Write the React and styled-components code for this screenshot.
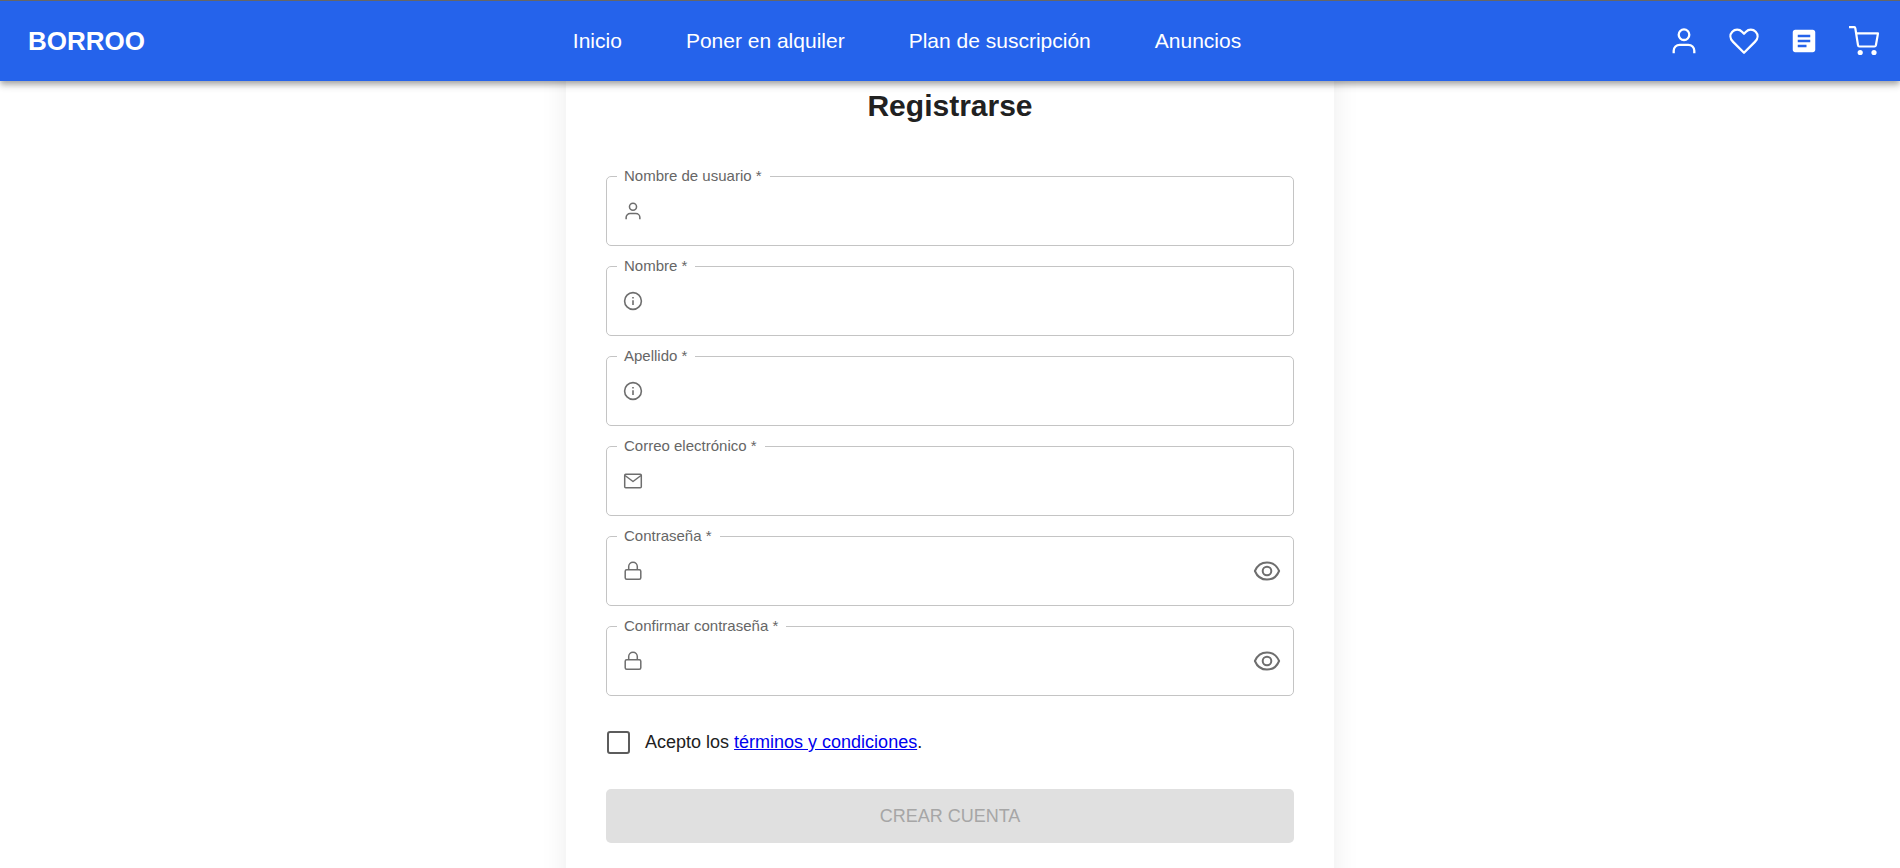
import React, { useState } from "react";
import styled, { createGlobalStyle } from "styled-components";
import { MdArticle } from "react-icons/md";

const GlobalStyle = createGlobalStyle`
  *, *::before, *::after { box-sizing: border-box; }
  body {
    margin: 0;
    background: #fff;
    color: #212121;
    font-family: "Liberation Sans", Arial, sans-serif;
  }
`;

const Page = styled.div`
  display: flex;
  flex-direction: column;
  height: 100vh;
`;

const Header = styled.header`
  position: relative;
  z-index: 1;
  flex: none;
  display: flex;
  align-items: center;
  justify-content: space-between;
  height: 81px;
  padding: 0 21px 0 28px;
  border-top: 1px solid #666;
  background: #2563eb;
  color: #fff;
  box-shadow: 0 3px 5px -1px rgba(0, 0, 0, 0.2), 0 5px 6px rgba(0, 0, 0, 0.14),
    0 1px 12px rgba(0, 0, 0, 0.12);
`;

const Brand = styled.a`
  color: inherit;
  font-size: 26px;
  line-height: 32px;
  font-weight: 700;
  text-decoration: none;
`;

const Nav = styled.nav`
  display: flex;
  gap: 64px;
`;

const NavLink = styled.a`
  color: #fff;
  font-size: 21px;
  line-height: 32px;
  text-decoration: none;
`;

const Actions = styled.div`
  display: flex;
  gap: 30px;
`;

const IconButton = styled.button`
  display: grid;
  place-items: center;
  width: ${(p) => p.$size}px;
  height: ${(p) => p.$size}px;
  padding: 0;
  border: 0;
  background: none;
  color: inherit;
  cursor: pointer;
`;

const Icon = styled.svg`
  display: block;
  flex: none;
  overflow: visible;
  fill: none;
  stroke: currentColor;
  stroke-linejoin: round;
`;

const Main = styled.main`
  flex: 1;
  min-height: 0;
  overflow-y: auto;
  scrollbar-width: none;
`;

const Card = styled.form`
  display: flex;
  flex-direction: column;
  max-width: 768px;
  margin: -40px auto 0;
  padding: 46px 40px 60px;
  background: #fff;
  box-shadow: 0 0 25px rgba(0, 0, 0, 0.08);
`;

const Title = styled.h1`
  margin: 0 0 41px;
  font-size: 30px;
  line-height: 38px;
  font-weight: 700;
  text-align: center;
`;

const Fields = styled.div`
  display: flex;
  flex-direction: column;
  gap: 10px;
`;

const FieldBox = styled.fieldset`
  height: 80px;
  min-width: 0;
  margin: 0;
  padding: 0 11px 0 10px;
  border: 1px solid #c4c4c4;
  border-radius: 5px;
  color: #6e6e6e;
`;

const Legend = styled.legend`
  padding: 0 8px 2px 7px;
  color: #666;
  font-size: 15px;
  line-height: 19px;
`;

const FieldRow = styled.div`
  display: flex;
  align-items: center;
  gap: 10px;
  height: 48px;
  padding-left: 6px;
`;

const Input = styled.input`
  flex: 1;
  min-width: 0;
  height: 40px;
  padding: 0;
  border: 0;
  outline: 0;
  background: none;
  color: #212121;
  font: inherit;
  font-size: 20px;
`;

const Terms = styled.div`
  display: flex;
  align-items: center;
  gap: 15px;
  margin: 33px 0 34px;
  font-size: 18px;
  line-height: 26px;
`;

const Checkbox = styled.input`
  appearance: none;
  flex: none;
  width: 23px;
  height: 23px;
  margin: 0 0 0 1px;
  border: 2px solid #5c5c5c;
  border-radius: 3px;
  &:checked { background: #2563eb; }
`;

const TermsLink = styled.a`
  color: #0000ee;
`;

const Submit = styled.button`
  height: 54px;
  border: 0;
  border-radius: 5px;
  background: ${(p) => (p.disabled ? "#e0e0e0" : "#2563eb")};
  color: ${(p) => (p.disabled ? "#a6a6a6" : "#fff")};
  font-family: inherit;
  font-size: 18px;
  line-height: 30px;
  text-transform: uppercase;
`;

const UserIcon = ({ size = 30, stroke = 2.3 }) => (
  <Icon width={size} height={size} viewBox="0 0 30 30" strokeWidth={stroke} aria-hidden="true">
    <circle cx="15" cy="8.7" r="5.3" />
    <path d="M4.7 27.3v-2.5a6 6 0 0 1 6-6h8.600a6 6 0 0 1 6 6v2.500" />
  </Icon>
);

const HeartIcon = () => (
  <Icon width="30" height="30" viewBox="0 0 30 30" strokeWidth="2.300" aria-hidden="true">
    <path d="M15 26.800 4.100 15.900C.6 12.300.9 8.200 3.300 5.700 6 3 10.300 3 13 5.700l2 2 2-2C19.700 3 24 3 26.700 5.700c2.400 2.500 2.700 6.600-.8 10.200Z" />
  </Icon>
);

const CartIcon = () => (
  <Icon width="30" height="30" viewBox="0 0 30 30" strokeWidth="2.200" aria-hidden="true">
    <path d="M0 1.200h5.300c.6 0 .9.400 1 1L9 19.200c.1.800.6 1.300 1.400 1.300h15c.8 0 1.300-.4 1.500-1.200L29 7.400H7.200" />
    <circle cx="11.200" cy="26.500" r="2.600" fill="currentColor" stroke="none" />
    <circle cx="25" cy="26.500" r="2.600" fill="currentColor" stroke="none" />
  </Icon>
);

const InfoIcon = () => (
  <Icon width="20" height="20" viewBox="0 0 20 20" strokeWidth="1.600" aria-hidden="true">
    <circle cx="10" cy="10" r="8.400" />
    <path d="M10 9.200v4.800M10 6v1.500" />
  </Icon>
);

const MailIcon = () => (
  <Icon width="20" height="20" viewBox="0 0 20 20" strokeWidth="1.500" aria-hidden="true">
    <rect x="1.700" y="3.200" width="16.600" height="13.600" rx="1" />
    <path d="m2 4.500 8 6 8-6" />
  </Icon>
);

const LockIcon = () => (
  <Icon width="20" height="20" viewBox="0 0 20 20" strokeWidth="1.500" aria-hidden="true">
    <rect x="2.200" y="8.700" width="15.600" height="9.600" rx="1.500" />
    <path d="M5.700 8.700V5.500a4.300 4.300 0 0 1 8.600 0v3.200" />
  </Icon>
);

const EyeIcon = () => (
  <Icon width="30" height="30" viewBox="0 0 30 30" strokeWidth="2" aria-hidden="true">
    <path d="M2.900 15C5.200 9.400 9.700 6.400 15 6.400S24.800 9.400 27.100 15c-2.300 5.600-6.800 8.600-12.100 8.600S5.200 20.600 2.900 15Z" />
    <circle cx="15" cy="15" r="4.300" />
  </Icon>
);

const fields = [
  { id: "usuario", label: "Nombre de usuario", icon: <UserIcon size={20} stroke={2.3} /> },
  { id: "nombre", label: "Nombre", icon: <InfoIcon /> },
  { id: "apellido", label: "Apellido", icon: <InfoIcon /> },
  { id: "correo", label: "Correo electrónico", icon: <MailIcon />, type: "email" },
  { id: "clave", label: "Contraseña", icon: <LockIcon />, type: "password" },
  { id: "confirmar", label: "Confirmar contraseña", icon: <LockIcon />, type: "password" },
];

function Field({ id, label, icon, type = "text" }) {
  const [visible, setVisible] = useState(false);
  const secret = type === "password";
  return (
    <FieldBox>
      <Legend>
        <label htmlFor={id}>{label} *</label>
      </Legend>
      <FieldRow>
        {icon}
        <Input id={id} name={id} type={secret && visible ? "text" : type} required />
        {secret && (
          <IconButton
            type="button"
            $size={30}
            aria-label="Mostrar contraseña"
            onClick={() => setVisible(!visible)}
          >
            <EyeIcon />
          </IconButton>
        )}
      </FieldRow>
    </FieldBox>
  );
}

export default function App() {
  const [accepted, setAccepted] = useState(false);
  return (
    <Page>
      <GlobalStyle />
      <Header>
        <Brand href="#">BORROO</Brand>
        <Nav>
          <NavLink href="#inicio">Inicio</NavLink>
          <NavLink href="#alquiler">Poner en alquiler</NavLink>
          <NavLink href="#plan">Plan de suscripción</NavLink>
          <NavLink href="#anuncios">Anuncios</NavLink>
        </Nav>
        <Actions>
          <IconButton $size={30} aria-label="Cuenta"><UserIcon /></IconButton>
          <IconButton $size={30} aria-label="Favoritos"><HeartIcon /></IconButton>
          <IconButton $size={30} aria-label="Artículos"><MdArticle size={30} /></IconButton>
          <IconButton $size={30} aria-label="Carrito"><CartIcon /></IconButton>
        </Actions>
      </Header>
      <Main>
        <Card>
          <Title>Registrarse</Title>
          <Fields>
            {fields.map((f) => (
              <Field key={f.id} {...f} />
            ))}
          </Fields>
          <Terms>
            <Checkbox
              id="terminos"
              type="checkbox"
              checked={accepted}
              onChange={(e) => setAccepted(e.target.checked)}
            />
            <label htmlFor="terminos">
              Acepto los <TermsLink href="#terminos">términos y condiciones</TermsLink>.
            </label>
          </Terms>
          <Submit type="submit" disabled={!accepted}>Crear cuenta</Submit>
        </Card>
      </Main>
    </Page>
  );
}
